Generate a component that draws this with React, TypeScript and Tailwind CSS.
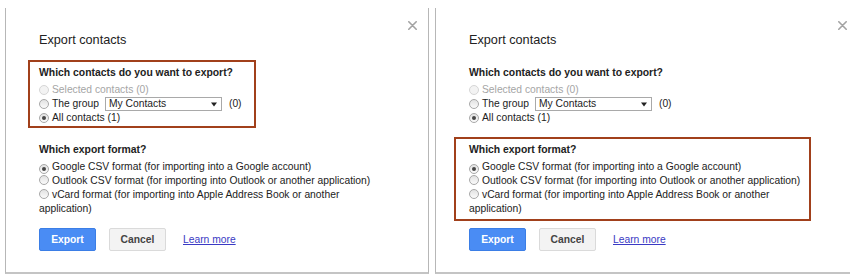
import React from "react";

const FONT = "font-['Liberation_Sans',Arial,sans-serif]";

function Radio({ checked, disabled }: { checked?: boolean; disabled?: boolean }) {
  return (
    <span
      className={`inline-flex items-center justify-center w-[10px] h-[10px] rounded-full border align-[-1px] mr-[3px] shrink-0 ${
        disabled
          ? "border-[#d6d6d6] bg-[#f3f3f3]"
          : "border-[#a8a8a8] bg-gradient-to-b from-[#e2e2e2] to-[#fbfbfb]"
      }`}
    >
      {checked && <span className="block w-[4px] h-[4px] rounded-full bg-[#474747]" />}
    </span>
  );
}

function Close() {
  return (
    <svg className="absolute top-[13px] right-[11px]" width="9" height="9" viewBox="0 0 9 9">
      <path d="M0.8 0.8L8.2 8.2M8.2 0.8L0.8 8.2" stroke="#a3a3a3" strokeWidth="1.6" strokeLinecap="round" />
    </svg>
  );
}

function Panel({ hl }: { hl: "top" | "bottom" }) {
  const box1 =
    hl === "top" ? "border-[#a1401b]" : "border-transparent";
  const box2 =
    hl === "bottom" ? "border-[#a1401b]" : "border-transparent";
  return (
    <div className="relative w-[424px] shrink-0 mt-[8px] border-l border-r border-b-2 border-l-[#b7b7b7] border-r-[#b7b7b7] border-b-[#c4c4c4] bg-white pb-[21px]">
      <Close />
      <div className="pl-[33px] pt-[24px] text-[#222]">
        <div className="h-[16px] leading-[16px] text-[12.7px] text-[#222]">Export contacts</div>

        {/* Section 1 */}
        <div
          className={`mt-[12px] border-2 ${box1} ${
            hl === "top" ? "-ml-[11px] pl-[9px] w-[228px]" : "-ml-[11px] pl-[9px] w-[228px]"
          } pt-[4px] pb-[1px] text-[10.3px] leading-[14px]`}
        >
          <div className="h-[14px] leading-[14px] text-[10.4px] font-bold text-[#222]">
            Which contacts do you want to export?
          </div>
          <div className="mt-[3px] h-[14px] flex items-center text-[#a5a5a5]">
            <Radio disabled />
            <span>Selected contacts (0)</span>
          </div>
          <div className="h-[14px] flex items-center whitespace-nowrap">
            <Radio />
            <span>The group</span>
            <span className="ml-[6px] w-[117px] h-[14px] border border-[#a9a9a9] bg-white flex items-center justify-between pl-[3px] pr-[4px] leading-[12px]">
              <span>My Contacts</span>
              <svg width="6" height="5" viewBox="0 0 6 5">
                <path d="M0 0.5H6L3 4.5Z" fill="#222" />
              </svg>
            </span>
            <span className="ml-[7px]">(0)</span>
          </div>
          <div className="h-[14px] flex items-center">
            <Radio checked />
            <span>All contacts (1)</span>
          </div>
        </div>

        {/* Section 2 */}
        <div
          className={`mt-[9px] border-2 ${box2} ${
            hl === "bottom" ? "-ml-[15px] pl-[13px] w-[357px]" : "-ml-[11px] pl-[9px] w-[353px]"
          } pt-[4px] pb-[3px] text-[10.3px] leading-[14px]`}
        >
          <div className="h-[14px] leading-[14px] text-[10.4px] font-bold text-[#222]">
            Which export format?
          </div>
          <div className="mt-[3px]">
            <Radio checked />
            Google CSV format (for importing into a Google account)
          </div>
          <div>
            <Radio />
            Outlook CSV format (for importing into Outlook or another application)
          </div>
          <div>
            <Radio />
            vCard format (for importing into Apple Address Book or another application)
          </div>
        </div>

        {/* Buttons */}
        <div className="mt-[7px] flex items-center text-[10.3px]">
          <div className="w-[57px] h-[23px] rounded-[2px] bg-[#4a8cf4] border border-[#3b7ee6] text-white font-bold flex items-center justify-center">
            Export
          </div>
          <div className="ml-[13px] w-[57px] h-[23px] rounded-[2px] bg-[#f3f3f3] border border-[#dadada] text-[#444] font-bold flex items-center justify-center">
            Cancel
          </div>
          <span className="ml-[17px] text-[#3a3ac4] underline">Learn more</span>
        </div>
      </div>
    </div>
  );
}

export default function App() {
  return (
    <div className={`${FONT} w-[850px] h-[280px] overflow-hidden bg-white flex items-start pl-[5px] gap-[6px]`}>
      <Panel hl="top" />
      <Panel hl="bottom" />
    </div>
  );
}
